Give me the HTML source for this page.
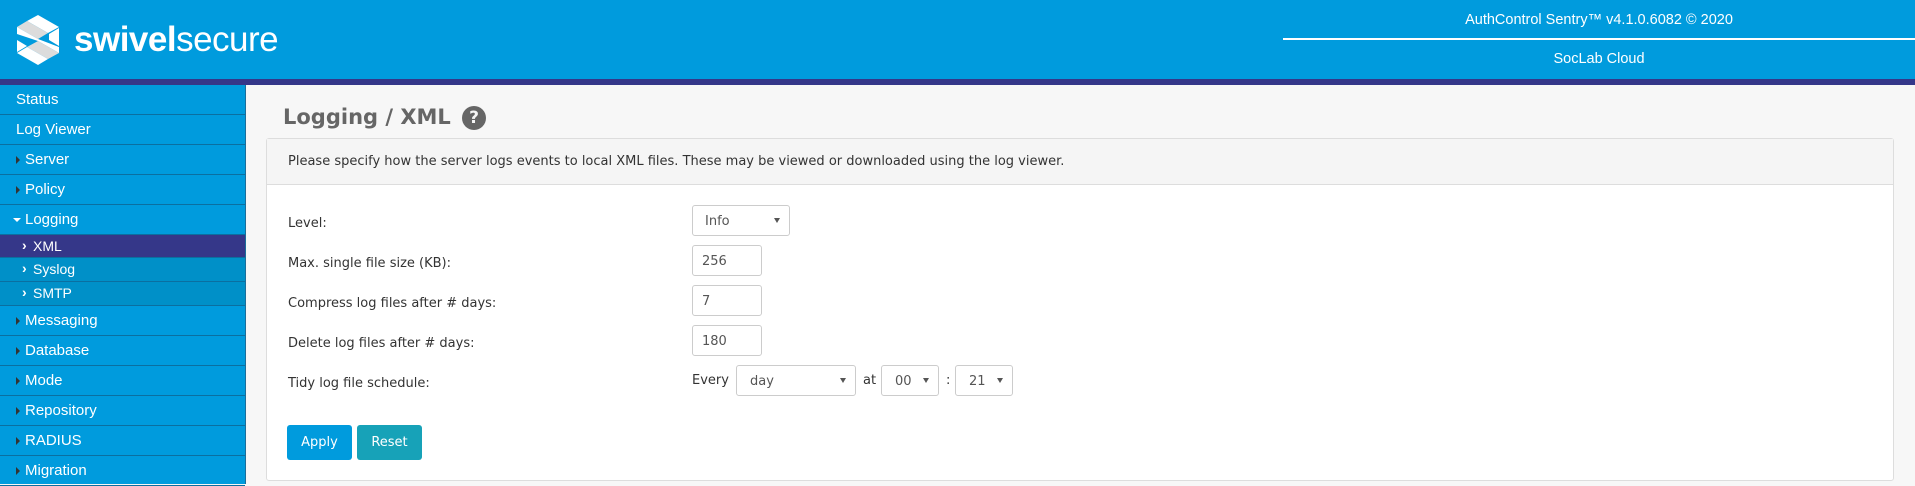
<!DOCTYPE html>
<html><head><meta charset="utf-8"><style>
*{margin:0;padding:0;box-sizing:border-box}
body{width:1915px;height:484px;overflow:hidden;background:#f7f7f7;font-family:"DejaVu Sans",Verdana,sans-serif;position:relative}
.hdr{position:absolute;left:0;top:0;width:1915px;height:79px;background:#009bdd}
.band{position:absolute;left:0;top:79px;width:1915px;height:6px;background:#353789}
.logo{position:absolute;left:74px;top:20px;color:#fff;font-family:"Liberation Sans",sans-serif;font-size:35px;letter-spacing:-0.5px}
.logo b{font-weight:bold}
.r1,.r2{position:absolute;left:1283px;width:632px;text-align:center;color:#fff;font-size:14.5px;font-family:"Liberation Sans",sans-serif}
.r1{top:12px}.r2{top:51px}
.line{position:absolute;left:1283px;top:38px;width:632px;height:2px;background:#fff}
.side{position:absolute;left:0;top:85px;width:246px;height:399px;background:#009bdd;border-right:1px solid #1b6e9a}
.it{height:30px;border-bottom:1px solid #0b6fa0;color:#fff;font-family:"Liberation Sans",sans-serif;font-size:15px;line-height:29px;padding-left:16px;position:relative}
.it.c{padding-left:25px}
.it.c:before{content:"";position:absolute;left:16px;top:11px;border-left:4px solid #333;border-top:4px solid transparent;border-bottom:4px solid transparent}
.it.o:before{left:13px;top:13px;border-top:4px solid #fff;border-left:4px solid transparent;border-right:4px solid transparent;border-bottom:0}
.sub{height:24px;background:#0090c8;border-bottom:1px solid #0b6fa0;color:#fff;font-family:"Liberation Sans",sans-serif;font-size:14px;line-height:23px;padding-left:33px;position:relative}
.sub:before{content:"›";position:absolute;left:22px;top:-1px;font-weight:bold}
.sub.a{background:#353789;height:23px}
h1{position:absolute;left:283px;top:105px;font-size:21px;color:#666;font-weight:bold}
.q{position:absolute;left:462px;top:106px;width:24px;height:24px;border-radius:50%;background:#666;color:#f7f7f7;font-weight:bold;font-size:17px;text-align:center;line-height:24px}
.panel{position:absolute;left:266px;top:138px;width:1628px;height:343px;background:#fff;border:1px solid #ddd;border-radius:3px}
.ph{height:46px;background:#f5f5f5;border-bottom:1px solid #ddd;font-size:13px;color:#333;padding:15px 0 0 21px}
.lb{position:absolute;left:21px;font-size:13px;color:#333}
.f{position:absolute;height:31px;border:1px solid #ccc;border-radius:3px;font-size:13px;color:#555;padding:8px 0 0 9px;background:#fff}
.f.s:after{content:"";position:absolute;right:9px;top:12px;border-top:5px solid #555;border-left:3px solid transparent;border-right:3px solid transparent}
.t{position:absolute;font-size:13px;color:#333}
.btn{position:absolute;top:286px;height:35px;width:65px;border-radius:3px;color:#fff;font-size:13px;text-align:center;line-height:35px}
</style></head><body>
<div class="hdr"></div><div class="band"></div>
<svg style="position:absolute;left:15px;top:14px" width="46" height="52" viewBox="0 0 46 52">
<polygon points="23,1 44,13 33,19 12,7" fill="#fff"/>
<polygon points="12,7 33,19 23,25 2,13" fill="#dcdcdc"/>
<polygon points="2,13 23,25 23,27 2,20" fill="#fff"/>
<polygon points="23,25 44,33 44,39 23,27" fill="#fff"/>
<polygon points="23,27 44,39 33,45 12,33" fill="#dcdcdc"/>
<polygon points="12,33 33,45 23,51 2,39" fill="#fff"/>
<polygon points="2,26 12,32 2,38" fill="#fff"/>
<polygon points="34,20 44,14 44,32 34,26" fill="#fff"/>
</svg>
<div class="logo"><b>swivel</b>secure</div>
<div class="r1">AuthControl Sentry™ v4.1.0.6082 © 2020</div>
<div class="line"></div>
<div class="r2">SocLab Cloud</div>
<div class="side">
<div class="it">Status</div>
<div class="it">Log Viewer</div>
<div class="it c">Server</div>
<div class="it c">Policy</div>
<div class="it c o">Logging</div>
<div class="sub a">XML</div>
<div class="sub">Syslog</div>
<div class="sub">SMTP</div>
<div class="it c">Messaging</div>
<div class="it c">Database</div>
<div class="it c">Mode</div>
<div class="it c">Repository</div>
<div class="it c">RADIUS</div>
<div class="it c">Migration</div>
</div>
<h1>Logging / XML</h1><div class="q">?</div>
<div class="panel">
<div class="ph">Please specify how the server logs events to local XML files. These may be viewed or downloaded using the log viewer.</div>
<div class="lb" style="top:77px">Level:</div>
<div class="lb" style="top:117px">Max. single file size (KB):</div>
<div class="lb" style="top:157px">Compress log files after # days:</div>
<div class="lb" style="top:197px">Delete log files after # days:</div>
<div class="lb" style="top:237px">Tidy log file schedule:</div>
<div class="f s" style="left:425px;top:66px;width:98px;padding-left:12px">Info</div>
<div class="f" style="left:425px;top:106px;width:70px">256</div>
<div class="f" style="left:425px;top:146px;width:70px">7</div>
<div class="f" style="left:425px;top:186px;width:70px">180</div>
<div class="t" style="left:425px;top:234px">Every</div>
<div class="f s" style="left:469px;top:226px;width:120px;padding-left:13px">day</div>
<div class="t" style="left:596px;top:234px">at</div>
<div class="f s" style="left:614px;top:226px;width:58px;padding-left:13px">00</div>
<div class="t" style="left:679px;top:234px">:</div>
<div class="f s" style="left:688px;top:226px;width:58px;padding-left:13px">21</div>
<div class="btn" style="left:20px;background:#009bdd">Apply</div>
<div class="btn" style="left:90px;background:#17a2b8">Reset</div>
</div>
</body></html>
